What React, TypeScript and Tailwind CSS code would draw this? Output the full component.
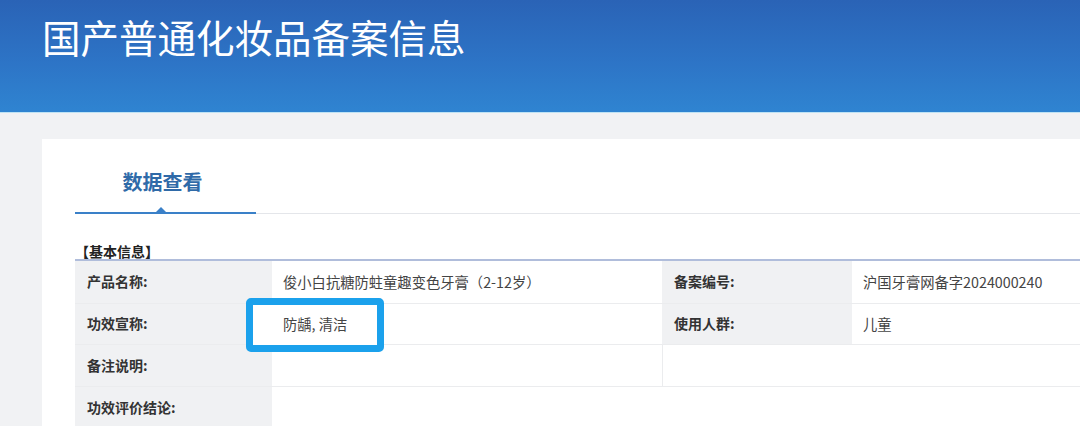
const font = { fontFamily: '"Noto Sans CJK SC", "Noto Sans", sans-serif' };

function Label({ children }: { children: React.ReactNode }) {
  return (
    <td className="bg-[#f0f1f3] pl-3 text-[14px] font-bold text-[#333] align-middle">{children}</td>
  );
}

function Value({ children, colSpan, className = '' }: { children?: React.ReactNode; colSpan?: number; className?: string }) {
  return (
    <td colSpan={colSpan} className={`pl-[11px] text-[14.3px] text-[#444] align-middle ${className}`}>
      {children}
    </td>
  );
}

export default function App() {
  return (
    <div className="w-[1080px] h-[426px] overflow-hidden bg-[#f1f2f4]" style={font}>
      <header className="h-[113px] bg-[linear-gradient(180deg,#2a63b6_0%,#2d74c6_55%,#2f84d1_100%)] border-b border-[#bfe3f4] pl-[42px] pt-[12px]">
        <h1 className="text-[38.5px] leading-[48px] text-white font-normal">国产普通化妆品备案信息</h1>
      </header>

      <main className="pt-[26px] pl-[42px]">
        <section className="bg-white h-[300px] pt-[28px] pl-[33px]">
          <div className="flex border-b border-[#e4e6ea]">
            <div className="relative w-[181px] pb-[15px] pr-[6px] border-b-2 border-[#3a80c8] -mb-px text-center">
              <span className="text-[20px] leading-[30px] font-bold text-[#2f6aa8]">数据查看</span>
              <span className="absolute left-[79px] -bottom-[2px] w-0 h-0 border-l-[7px] border-r-[7px] border-b-[7px] border-l-transparent border-r-transparent border-b-[#3a80c8]" />
            </div>
          </div>

          <h2 className="mt-[29px] text-[14px] leading-[16px] font-bold text-[#222]">【基本信息】</h2>

          <table className="w-[1005px] table-fixed border-collapse border-t-2 border-[#b0bddb]">
            <colgroup>
              <col className="w-[197px]" />
              <col className="w-[390px]" />
              <col className="w-[190px]" />
              <col />
            </colgroup>
            <tbody>
              <tr className="h-[43px] border-b border-[#ebecee]">
                <Label>产品名称:</Label>
                <Value>俊小白抗糖防蛀童趣变色牙膏（2-12岁）</Value>
                <Label>备案编号:</Label>
                <Value>沪国牙膏网备字2024000240</Value>
              </tr>
              <tr className="h-[41px] border-b border-[#ebecee]">
                <Label>功效宣称:</Label>
                <Value className="relative">
                  <span className="absolute left-[-26px] top-[-6px] w-[138px] h-[54px] rounded-[5px] border-[7px] border-[#1ba1ec] bg-white" />
                  <span className="relative z-10">防龋, 清洁</span>
                </Value>
                <Label>使用人群:</Label>
                <Value>儿童</Value>
              </tr>
              <tr className="h-[42px] border-b border-[#ebecee]">
                <Label>备注说明:</Label>
                <Value />
                <Value colSpan={2} className="border-l border-[#ebecee]" />
              </tr>
              <tr className="h-[42px]">
                <Label>功效评价结论:</Label>
                <Value colSpan={3} />
              </tr>
            </tbody>
          </table>
        </section>
      </main>
    </div>
  );
}
